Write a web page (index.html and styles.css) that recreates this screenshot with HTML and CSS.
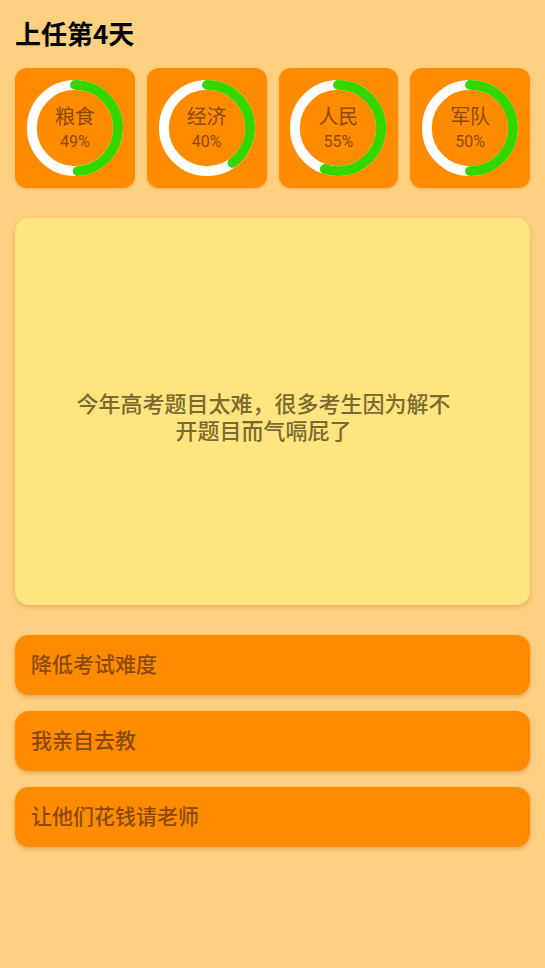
FILE: index.html
```html
<!DOCTYPE html>
<html lang="zh-CN">
<head>
<meta charset="utf-8">
<title>上任第4天</title>
<link rel="stylesheet" href="styles.css">
</head>
<body>
<div class="page">
  <h1 class="title">上任第4天</h1>
  <div class="stats">
    <div class="stat">
      <svg class="ring" viewBox="0 0 100 100">
        <circle class="track" cx="50" cy="50" r="44"/>
        <circle class="bar" cx="50" cy="50" r="44" pathLength="100" style="stroke-dasharray: 49 100"/>
      </svg>
      <div class="stat-text"><span class="stat-name">粮食</span><span class="stat-val">49%</span></div>
    </div>
    <div class="stat">
      <svg class="ring" viewBox="0 0 100 100">
        <circle class="track" cx="50" cy="50" r="44"/>
        <circle class="bar" cx="50" cy="50" r="44" pathLength="100" style="stroke-dasharray: 40 100"/>
      </svg>
      <div class="stat-text"><span class="stat-name">经济</span><span class="stat-val">40%</span></div>
    </div>
    <div class="stat">
      <svg class="ring" viewBox="0 0 100 100">
        <circle class="track" cx="50" cy="50" r="44"/>
        <circle class="bar" cx="50" cy="50" r="44" pathLength="100" style="stroke-dasharray: 55 100"/>
      </svg>
      <div class="stat-text"><span class="stat-name">人民</span><span class="stat-val">55%</span></div>
    </div>
    <div class="stat">
      <svg class="ring" viewBox="0 0 100 100">
        <circle class="track" cx="50" cy="50" r="44"/>
        <circle class="bar" cx="50" cy="50" r="44" pathLength="100" style="stroke-dasharray: 50 100"/>
      </svg>
      <div class="stat-text"><span class="stat-name">军队</span><span class="stat-val">50%</span></div>
    </div>
  </div>
  <div class="event">
    <p class="event-text">今年高考题目太难，很多考生因为解不开题目而气嗝屁了</p>
  </div>
  <div class="choices">
    <button class="choice">降低考试难度</button>
    <button class="choice">我亲自去教</button>
    <button class="choice">让他们花钱请老师</button>
  </div>
</div>
</body>
</html>
```
FILE: styles.css
```css
html, body {
  margin: 0;
  padding: 0;
  background: #ffd080;
}
body {
  font-family: "Noto Sans CJK SC", "Noto Sans", sans-serif;
  width: 545px;
  height: 968px;
  overflow: hidden;
}
.page {
  padding: 0 15px;
}
.title {
  margin: 0;
  padding-top: 15px;
  font-size: 26px;
  line-height: 36px;
  font-weight: 700;
  color: #000;
}
.stats {
  margin-top: 17px;
  display: grid;
  grid-template-columns: repeat(4, 1fr);
  gap: 12px;
}
.stat {
  position: relative;
  aspect-ratio: 1 / 1;
  background: #ff8c00;
  border-radius: 12px;
  box-shadow: 0 1px 3px rgba(150, 80, 0, 0.25);
  display: flex;
  align-items: center;
  justify-content: center;
}
.ring {
  width: 98px;
  height: 98px;
  transform: rotate(-90deg);
}
.track {
  fill: none;
  stroke: #ffffff;
  stroke-width: 10;
}
.bar {
  fill: none;
  stroke: #33d600;
  stroke-width: 10;
  stroke-linecap: round;
}
.stat-text {
  position: absolute;
  inset: 0;
  display: flex;
  flex-direction: column;
  align-items: center;
  justify-content: center;
  color: #8b4a00;
  font-weight: 400;
}
.stat-name {
  font-size: 20px;
  line-height: 24px;
}
.stat-val {
  font-family: Roboto, "Noto Sans", sans-serif;
  font-size: 16px;
  line-height: 20px;
  margin-top: 4px;
}
.event {
  margin-top: 30px;
  height: 387px;
  background: #ffe47f;
  border-radius: 14px;
  box-shadow: 0 2px 5px rgba(160, 100, 0, 0.3);
  display: flex;
  align-items: center;
  justify-content: center;
}
.event-text {
  margin: 0 18px 0 0;
  width: 386px;
  text-align: center;
  font-size: 22px;
  line-height: 27px;
  font-weight: 500;
  color: #7a6a30;
  padding-top: 10px;
}
.choices {
  margin-top: 30px;
  display: flex;
  flex-direction: column;
  gap: 15.5px;
}
.choice {
  display: block;
  width: 100%;
  height: 60.5px;
  border: none;
  border-radius: 14px;
  background: #ff8c00;
  box-shadow: 0 2px 4px rgba(160, 90, 0, 0.35);
  text-align: left;
  padding: 0 16px 4px;
  font-family: "Noto Sans CJK SC", "Noto Sans", sans-serif;
  font-size: 21px;
  font-weight: 500;
  color: #8b4a00;
}
```
